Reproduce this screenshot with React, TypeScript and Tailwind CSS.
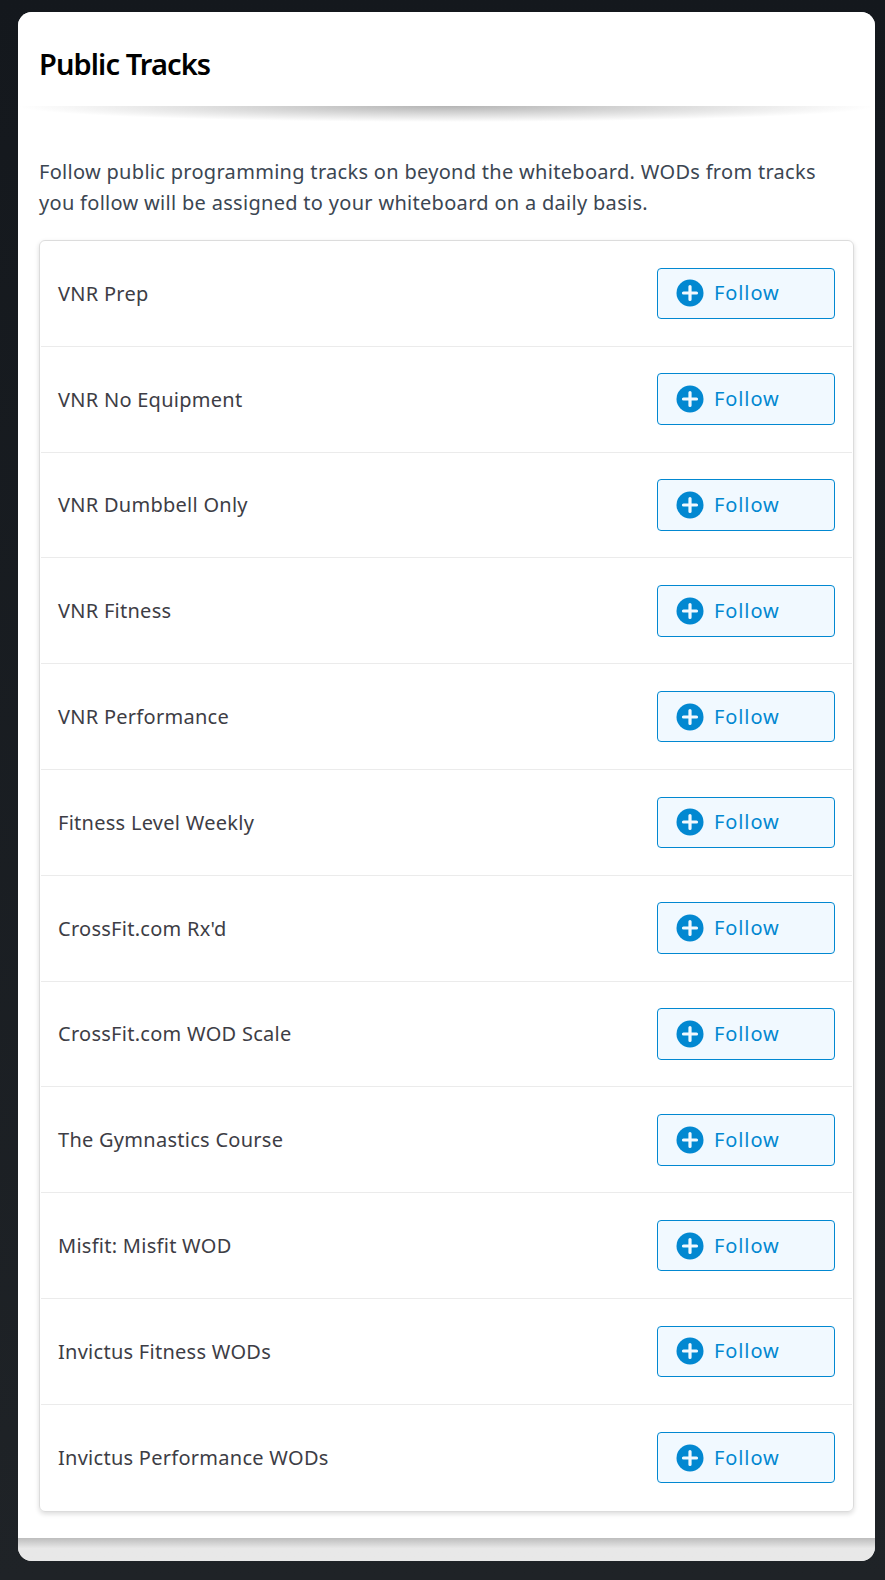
const tracks = [
  'VNR Prep',
  'VNR No Equipment',
  'VNR Dumbbell Only',
  'VNR Fitness',
  'VNR Performance',
  'Fitness Level Weekly',
  "CrossFit.com Rx'd",
  'CrossFit.com WOD Scale',
  'The Gymnastics Course',
  'Misfit: Misfit WOD',
  'Invictus Fitness WODs',
  'Invictus Performance WODs',
];

const PlusIcon = () => (
  <svg width="28" height="28" viewBox="0 0 28 28" className="shrink-0">
    <circle cx="14" cy="14" r="13.5" fill="#0288d1" />
    <path d="M14 7.5v13M7.5 14h13" stroke="#f1f9ff" strokeWidth="3.2" strokeLinecap="round" />
  </svg>
);

const App = () => {
  return (
    <div className="min-h-[1580px] bg-gradient-to-b from-[#14181d] to-[#1f2327] px-[18px] pt-[12px] pb-[19px] font-['Noto_Sans',sans-serif]">
      <div className="w-[857px] rounded-[14px] bg-[#e8e8e8] overflow-hidden">
        <div className="bg-white">
          <div className="h-[94px] flex items-center px-[21px] pt-[10px]">
            <h1 className="text-[29px] font-semibold text-black tracking-[-0.9px]">Public Tracks</h1>
          </div>
          <div className="h-[20px] bg-[radial-gradient(ellipse_50%_80%_at_50%_0%,#b4b4b4,#ffffff)]"></div>
          <div className="px-[21px] pt-[30px] pb-[26px]">
            <p className="text-[20px] leading-[31px] text-[#3b4652] tracking-[0.3px] whitespace-nowrap">
              Follow public programming tracks on beyond the whiteboard. WODs from tracks
              <br />
              you follow will be assigned to your whiteboard on a daily basis.
            </p>
            <div className="mt-[22px] rounded-[6px] border border-[#dcdcdc] shadow-[0_2px_5px_rgba(0,0,0,0.14)] px-[1px]">
              {tracks.map((name, i) => (
                <div
                  key={name}
                  className={`h-[105.8px] flex items-center justify-between px-[17px] ${i < tracks.length - 1 ? 'border-b border-[#ebebeb]' : ''}`}
                >
                  <span className="text-[20px] text-[#3d3d45] tracking-[0.27px] pt-[1px]">{name}</span>
                  <button className="w-[178px] h-[51.5px] flex items-center gap-[10px] pl-[18px] rounded-[4px] border border-[#0288d1] bg-[#f1f9ff] text-[#0288d1] text-[20px] tracking-[0.9px]">
                    <PlusIcon />
                    Follow
                  </button>
                </div>
              ))}
            </div>
          </div>
        </div>
        <div className="h-[23px] bg-gradient-to-b from-[#bdbdbd] to-[#e8e8e8] to-[45%]"></div>
      </div>
    </div>
  );
};

export default App;
